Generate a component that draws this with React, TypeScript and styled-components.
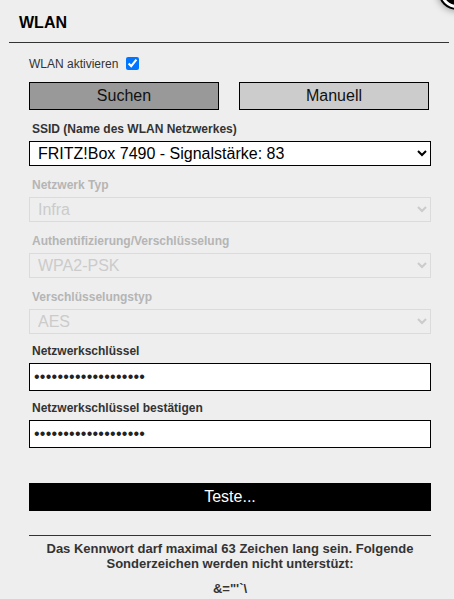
import React from 'react';
import styled, { createGlobalStyle } from 'styled-components';

const GlobalStyle = createGlobalStyle`
  * {
    box-sizing: border-box;
  }

  html, body {
    margin: 0;
    padding: 0;
    overflow: hidden;
  }

  body {
    background: #eeeeee;
    font-family: "Liberation Sans", Arial, sans-serif;
    color: #333;
  }
`;

const Dialog = styled.section`
  position: relative;
  margin: 0 5px 0 9px;
`;

const CloseButton = styled.div`
  position: fixed;
  left: 440px;
  top: -26px;
  width: 34px;
  height: 34px;
  border-radius: 50%;
  background: #000;
  border: 3px solid #fff;
  box-shadow: 0 0 0 2px #000, 0 0 7px 3px rgba(0, 0, 0, 0.35);
  display: flex;
  align-items: center;
  justify-content: center;
`;

const Header = styled.header`
  height: 43px;
  padding: 14px 10px 0;
  border-bottom: 1px solid #333;
`;

const Title = styled.h1`
  margin: 0;
  font-size: 16px;
  line-height: 18px;
  font-weight: bold;
  color: #000;
`;

const Form = styled.form`
  padding: 14px 18px 0 20px;
`;

const CheckRow = styled.label`
  display: flex;
  align-items: center;
  height: 13px;
  font-size: 12px;
  color: #333;

  input {
    margin: 0 0 0 8px;
    width: 13px;
    height: 13px;
    accent-color: #0075ff;
  }
`;

const ButtonRow = styled.div`
  display: flex;
  gap: 20px;
  margin-top: 12px;
`;

const ModeButton = styled.button<{ $active?: boolean }>`
  width: 190px;
  height: 28px;
  padding: 0;
  border: 1px solid #000;
  background: ${(p) => (p.$active ? '#999999' : '#cccccc')};
  color: #111;
  font-family: inherit;
  font-size: 16px;
`;

const Field = styled.div<{ $gap: number }>`
  margin-top: ${(p) => p.$gap}px;
`;

const Label = styled.label<{ $disabled?: boolean }>`
  display: block;
  margin: 0 0 4px 3px;
  font-size: 12px;
  line-height: 15px;
  font-weight: bold;
  color: ${(p) => (p.$disabled ? '#b5b5b5' : '#333')};
`;

const Select = styled.select`
  display: block;
  width: 100%;
  height: 25px;
  padding: 0 4px;
  border: 1px solid #000;
  border-radius: 0;
  background: #fff;
  color: #000;
  font-family: inherit;
  font-size: 16px;

  &:disabled {
    border-color: #d4d4d4;
    background: #eeeeee;
    color: #bdbdbd;
  }
`;

const Input = styled.input`
  display: block;
  width: 100%;
  height: 28px;
  padding: 0 4px;
  border: 1px solid #000;
  border-radius: 0;
  background: #fff;
  color: #222;
  font-family: inherit;
  font-size: 16px;
  letter-spacing: 0.25px;
  outline: none;
`;

const TestButton = styled.button`
  display: block;
  width: 100%;
  height: 28px;
  margin-top: 35px;
  border: none;
  background: #000;
  color: #fff;
  font-family: inherit;
  font-size: 16px;
`;

const Divider = styled.hr`
  margin: 24px 0 0;
  border: none;
  border-top: 1px solid #333;
`;

const Note = styled.p<{ $gap: number }>`
  margin: ${(p) => p.$gap}px 0 0;
  text-align: center;
  font-size: 13px;
  line-height: 15px;
  font-weight: bold;
  color: #333;
`;

const networks = ['FRITZ!Box 7490 - Signalstärke: 83'];
const secret = '0123456789abcdefghi';

export default function App() {
  return (
    <>
      <GlobalStyle />
      <Dialog>
        <CloseButton>
          <svg width="12" height="12" viewBox="0 0 12 12">
            <path d="M2 2 L10 10 M10 2 L2 10" stroke="#fff" strokeWidth="2.5" strokeLinecap="round" />
          </svg>
        </CloseButton>
        <Header>
          <Title>WLAN</Title>
        </Header>
        <Form onSubmit={(e) => e.preventDefault()}>
          <CheckRow>
            WLAN aktivieren
            <input type="checkbox" defaultChecked />
          </CheckRow>

          <ButtonRow>
            <ModeButton type="button" $active>Suchen</ModeButton>
            <ModeButton type="button">Manuell</ModeButton>
          </ButtonRow>

          <Field $gap={12}>
            <Label>SSID (Name des WLAN Netzwerkes)</Label>
            <Select defaultValue={networks[0]}>
              {networks.map((n) => (
                <option key={n}>{n}</option>
              ))}
            </Select>
          </Field>

          <Field $gap={12}>
            <Label $disabled>Netzwerk Typ</Label>
            <Select disabled>
              <option>Infra</option>
            </Select>
          </Field>

          <Field $gap={12}>
            <Label $disabled>Authentifizierung/Verschlüsselung</Label>
            <Select disabled>
              <option>WPA2-PSK</option>
            </Select>
          </Field>

          <Field $gap={12}>
            <Label $disabled>Verschlüsselungstyp</Label>
            <Select disabled>
              <option>AES</option>
            </Select>
          </Field>

          <Field $gap={10}>
            <Label>Netzwerkschlüssel</Label>
            <Input type="password" defaultValue={secret} />
          </Field>

          <Field $gap={10}>
            <Label>Netzwerkschlüssel bestätigen</Label>
            <Input type="password" defaultValue={secret} />
          </Field>

          <TestButton type="button">Teste...</TestButton>

          <Divider />
          <Note $gap={5}>
            Das Kennwort darf maximal 63 Zeichen lang sein. Folgende Sonderzeichen werden nicht unterstüzt:
          </Note>
          <Note $gap={10}>&amp;="'`\</Note>
        </Form>
      </Dialog>
    </>
  );
}
